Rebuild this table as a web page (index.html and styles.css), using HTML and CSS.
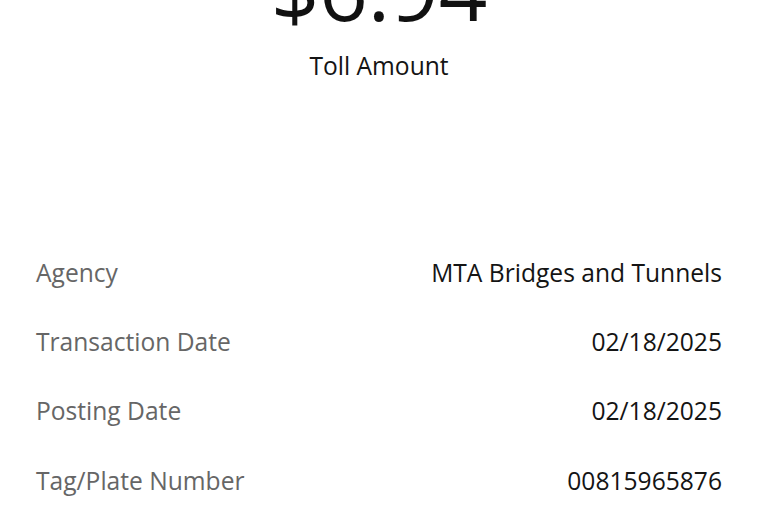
FILE: index.html
```html
<!DOCTYPE html>
<html>
<head>
<meta charset="utf-8">
<link rel="stylesheet" href="styles.css">
</head>
<body>
<main class="page">
  <section class="summary">
    <div class="amount">$6.94</div>
    <div class="amount-label">Toll Amount</div>
  </section>
  <section class="details">
    <div class="row"><span class="key">Agency</span><span class="val">MTA Bridges and Tunnels</span></div>
    <div class="row"><span class="key">Transaction Date</span><span class="val">02/18/2025</span></div>
    <div class="row"><span class="key">Posting Date</span><span class="val">02/18/2025</span></div>
    <div class="row"><span class="key">Tag/Plate Number</span><span class="val">00815965876</span></div>
  </section>
</main>
</body>
</html>
```
FILE: styles.css
```css
html, body {
  margin: 0;
  padding: 0;
  background: #ffffff;
  overflow: hidden;
}
body {
  font-family: "Open Sans", "Noto Sans", sans-serif;
  color: #141414;
}
.page {
  width: 758px;
  height: 520px;
  overflow: hidden;
}
.summary {
  display: flex;
  flex-direction: column;
  align-items: center;
}
.amount {
  margin-top: -54px;
  font-size: 85px;
  line-height: 85px;
  height: 85px;
  color: #111;
}
.amount-label {
  margin-top: 19px;
  font-size: 24.6px;
  line-height: 32px;
  color: #141414;
}
.details {
  margin-top: 156px;
  padding: 0 36px;
  display: flex;
  flex-direction: column;
}
.row {
  display: flex;
  justify-content: space-between;
  align-items: center;
  height: 69.33px;
  font-size: 24.6px;
  line-height: 32px;
}
.key {
  color: #666666;
}
.val {
  color: #141414;
}
```
